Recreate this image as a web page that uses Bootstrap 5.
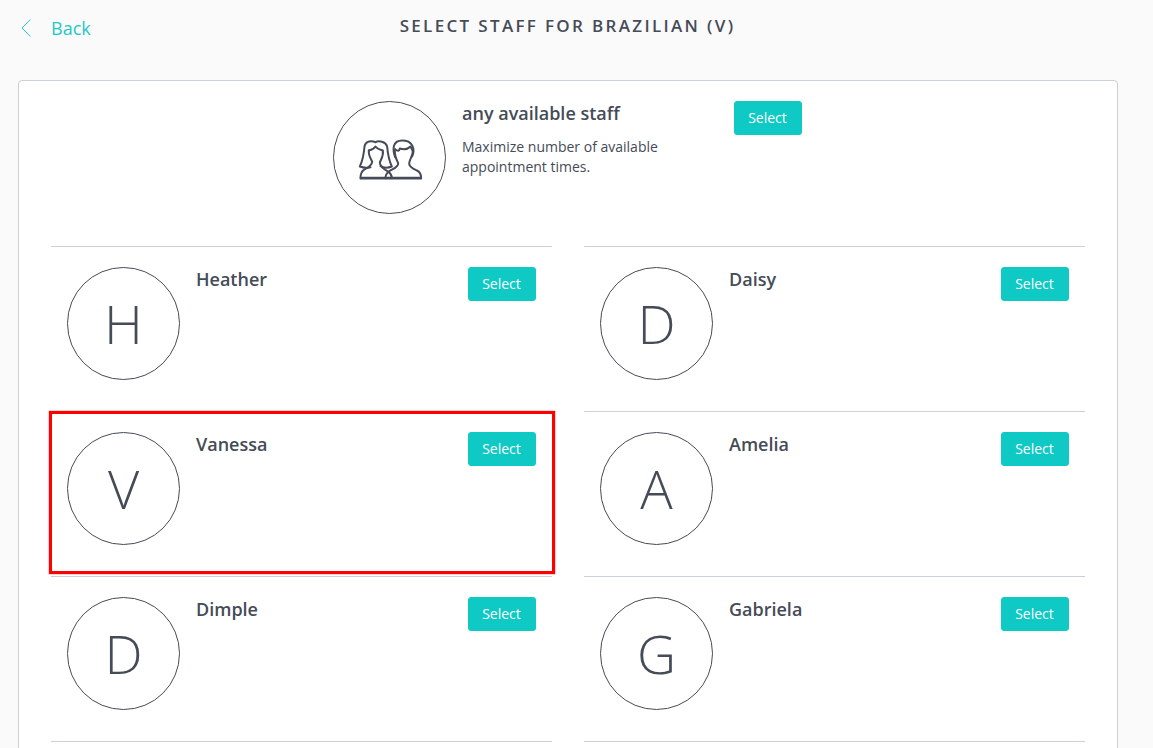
<!DOCTYPE html>
<html lang="en">
<head>
<meta charset="utf-8">
<title>Select staff</title>
<link href="https://cdn.jsdelivr.net/npm/bootstrap@5.3.0/dist/css/bootstrap.min.css" rel="stylesheet">
<style>
html, body { height: 100%; }
body { background: #fafafb; font-family: "Open Sans", sans-serif; color: #454b57; position: relative; }
.top-bar { height: 80px; }
.back-link { color: #25c8c8; font-size: 18px; text-decoration: none; line-height: 24px; padding: 16px 0 0 21px; gap: 20px; }
.back-link svg { width: 10px; height: 18px; }
.page-title { font-size: 17px; font-weight: 600; letter-spacing: 2.33px; line-height: 22px; top: 15px; left: 0; right: 18px; text-align: center; color: #454b57; }
.staff-panel { margin: 0 35px 0 18px; padding: 0 32px; border: 1px solid #ccd0dc; border-radius: 4px; background: #fff; }
.staff-cols { display: grid; grid-template-columns: 501px 501px; column-gap: 32px; }
.staff-item { height: 165px; padding: 20px 16px 0; display: flex; }
.staff-lined { border-top: 1px solid #ccd0dc; }
.staff-any { width: 501px; margin: 0 0 0 266px; }
.staff-pic { width: 113px; height: 113px; flex: none; border: 1px solid #454b57; border-radius: 50%; font-size: 54px; font-weight: 300; line-height: 1; padding-bottom: 2px; color: #454b57; }
.staff-pic svg { width: 80px; height: 60px; }
.staff-info { padding-left: 16px; flex: 1 1 auto; min-width: 0; }
.staff-name { font-size: 18px; font-weight: 600; line-height: 24px; margin: 0; color: #454b57; }
.staff-note { font-size: 14px; line-height: 20px; margin: 12px 0 0; width: 225px; color: #454b57; }
.select-btn { flex: none; width: 68px; height: 34px; padding: 0 1px 0 0; font-size: 14px; line-height: 32px; color: #fff; background: #0fc9c5; border-color: #0fc9c5; border-radius: 3px; }
.select-btn:hover { color: #fff; background: #0db5b1; }
.red-mark { position: absolute; left: 49px; top: 411px; width: 506px; height: 163px; border: 3px solid #ff0000; box-shadow: 0 0 0 .5px rgba(255,0,0,.35); pointer-events: none; }
</style>
</head>
<body class="overflow-hidden">
<header class="top-bar position-relative">
  <a href="#" class="back-link d-inline-flex align-items-center">
    <svg viewBox="0 0 10 18" fill="none" stroke="#25c8c8" stroke-width="1"><path d="M9.500 .5 1 9l8.500 8.500"/></svg>
    <span>Back</span>
  </a>
  <h1 class="page-title position-absolute text-uppercase m-0">Select staff for Brazilian (V)</h1>
</header>
<main class="staff-panel">
  <div class="staff-item staff-any">
    <div class="staff-pic staff-pic-icon d-flex align-items-center justify-content-center">
      <svg viewBox="-1.500 1.500 240 180" fill="none" stroke="#454b57" stroke-width="6" stroke-linejoin="round" stroke-linecap="round">
        <path stroke-width="8" stroke-linecap="butt" d="M28 155H213"/>
        <path d="M75 47C65 42 45 42 42 60 40 85 35 105 28 120 38 124 48 125 60 122"/>
        <path d="M75 47C85 42 105 45 110 60 112 85 117 105 124 120 112 125 100 125 90 119"/>
        <path d="M55 72C65 70 72 65 75 60 80 67 90 70 97 72 100 90 90 100 88 108 88 120 100 128 114 136 121 141 124 147 124 155"/>
        <path d="M55 72C53 85 60 95 65 105 65 118 50 125 40 130 32 135 30 145 30 155"/>
        <path d="M134 92C126 70 125 42 155 42 185 42 195 65 185 90"/>
        <path d="M134 68C142 75 146 74 148 66 160 70 172 68 180 60 183 66 186 70 187 75"/>
        <path d="M133 72C132 85 138 100 143 110 145 122 125 128 115 135 108 140 105 147 105 155"/>
        <path d="M187 75C186 90 176 100 176 112 176 122 190 128 199 132 208 136 212 145 212 155"/>
      </svg>
    </div>
    <div class="staff-info">
      <h2 class="staff-name">any available staff</h2>
      <p class="staff-note">Maximize number of available appointment times.</p>
    </div>
    <button type="button" class="btn select-btn">Select</button>
  </div>
  <div class="staff-cols">
    <div class="staff-item staff-lined"><div class="staff-pic d-flex align-items-center justify-content-center">H</div><div class="staff-info"><h2 class="staff-name">Heather</h2></div><button type="button" class="btn select-btn">Select</button></div>
    <div class="staff-item staff-lined"><div class="staff-pic d-flex align-items-center justify-content-center">D</div><div class="staff-info"><h2 class="staff-name">Daisy</h2></div><button type="button" class="btn select-btn">Select</button></div>
    <div class="staff-item staff-lined"><div class="staff-pic d-flex align-items-center justify-content-center">V</div><div class="staff-info"><h2 class="staff-name">Vanessa</h2></div><button type="button" class="btn select-btn">Select</button></div>
    <div class="staff-item staff-lined"><div class="staff-pic d-flex align-items-center justify-content-center">A</div><div class="staff-info"><h2 class="staff-name">Amelia</h2></div><button type="button" class="btn select-btn">Select</button></div>
    <div class="staff-item staff-lined"><div class="staff-pic d-flex align-items-center justify-content-center">D</div><div class="staff-info"><h2 class="staff-name">Dimple</h2></div><button type="button" class="btn select-btn">Select</button></div>
    <div class="staff-item staff-lined"><div class="staff-pic d-flex align-items-center justify-content-center">G</div><div class="staff-info"><h2 class="staff-name">Gabriela</h2></div><button type="button" class="btn select-btn">Select</button></div>
    <div class="staff-item staff-lined"></div>
    <div class="staff-item staff-lined"></div>
  </div>
</main>
<div class="red-mark"></div>
<script src="https://cdn.jsdelivr.net/npm/bootstrap@5.3.0/dist/js/bootstrap.bundle.min.js"></script>
</body>
</html>
